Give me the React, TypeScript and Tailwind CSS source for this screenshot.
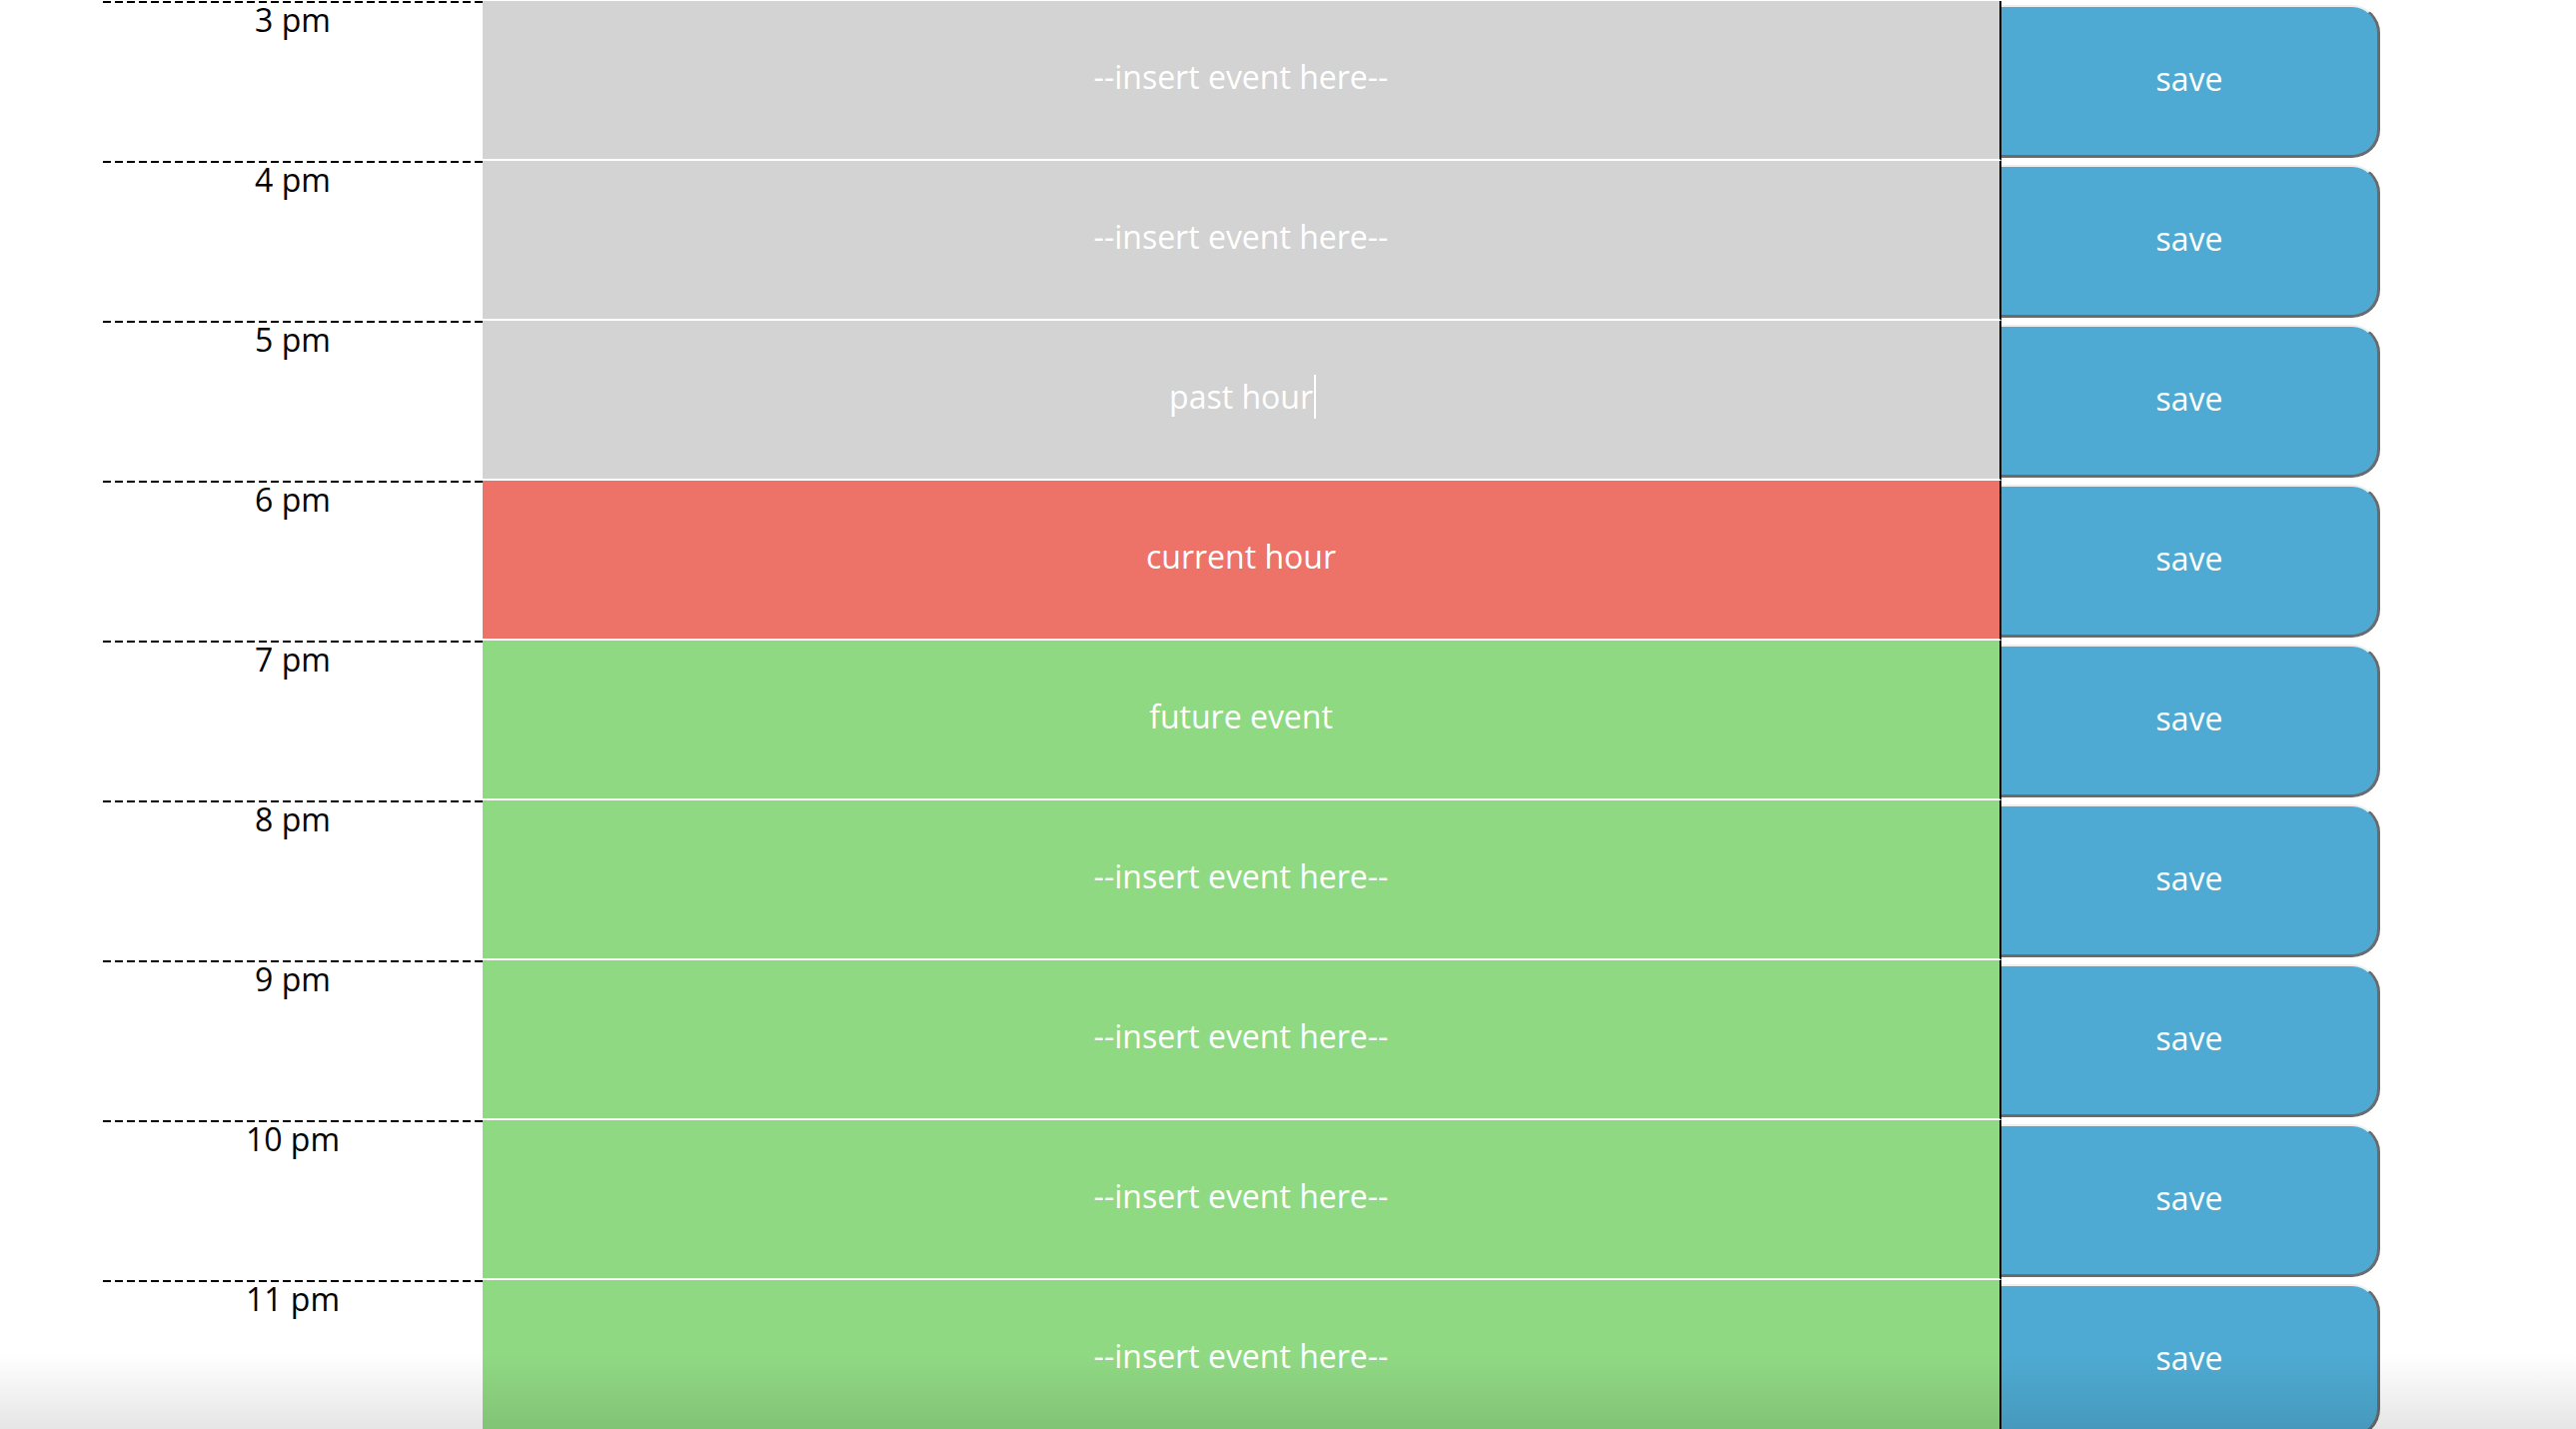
import { useEffect, useRef } from "react";

type Slot = { label: string; state: "past" | "present" | "future"; text?: string; focus?: boolean };

const slots: Slot[] = [
  { label: "3 pm", state: "past" },
  { label: "4 pm", state: "past" },
  { label: "5 pm", state: "past", text: "past hour", focus: true },
  { label: "6 pm", state: "present", text: "current hour" },
  { label: "7 pm", state: "future", text: "future event" },
  { label: "8 pm", state: "future" },
  { label: "9 pm", state: "future" },
  { label: "10 pm", state: "future" },
  { label: "11 pm", state: "future" },
];

const bg: Record<Slot["state"], string> = {
  past: "bg-[#d3d3d3]",
  present: "bg-[#ed7268]",
  future: "bg-[#90d983]",
};

function TimeBlock({ slot }: { slot: Slot }) {
  const ref = useRef<HTMLTextAreaElement>(null);

  useEffect(() => {
    if (slot.focus && ref.current) {
      const len = ref.current.value.length;
      ref.current.focus();
      ref.current.setSelectionRange(len, len);
    }
  }, [slot.focus]);

  return (
    <div className="relative flex h-[160px]">
      <div className="flex w-[380px] flex-col text-center text-[32px] leading-[1.06] text-black">
        <div className="h-[2px] bg-[repeating-linear-gradient(to_right,#000_0_8px,transparent_8px_12px)]" />
        <span>{slot.label}</span>
      </div>
      <textarea
        ref={ref}
        defaultValue={slot.text}
        placeholder="--insert event here--"
        className={`w-[1520px] h-[160px] resize-none border-r-2 border-r-black border-b-2 border-b-white pt-[52px] px-[10px] text-center text-[32px] leading-[1.5] text-white placeholder:text-white outline-none caret-white ${bg[slot.state]}`}
      />
      <button className="mt-[4px] h-[153px] w-[379px] rounded-r-[28px] border-t-2 border-r-[3px] border-b-[3px] border-t-[#eeeeee] border-r-[#6b6b6b] border-b-[#6b6b6b] bg-[#4eaad2] pb-[5px] text-[32px] text-white">
        save
      </button>
      {/* text cursor in the focused box */}
      {slot.focus && <span className="pointer-events-none absolute left-[1212px] top-[54px] h-[44px] w-[2px] bg-white" />}
    </div>
  );
}

export default function App() {
  return (
    <div className="relative h-screen overflow-hidden bg-white" style={{ fontFamily: '"Open Sans", "Liberation Sans", sans-serif' }}>
      <div className="ml-[103px] mt-[1px] flex flex-col">
        {slots.map((s) => (
          <TimeBlock key={s.label} slot={s} />
        ))}
      </div>
      {/* bottom fade */}
      <div className="pointer-events-none absolute inset-x-0 bottom-0 h-[75px] bg-linear-to-b from-transparent to-black/10" />
    </div>
  );
}
